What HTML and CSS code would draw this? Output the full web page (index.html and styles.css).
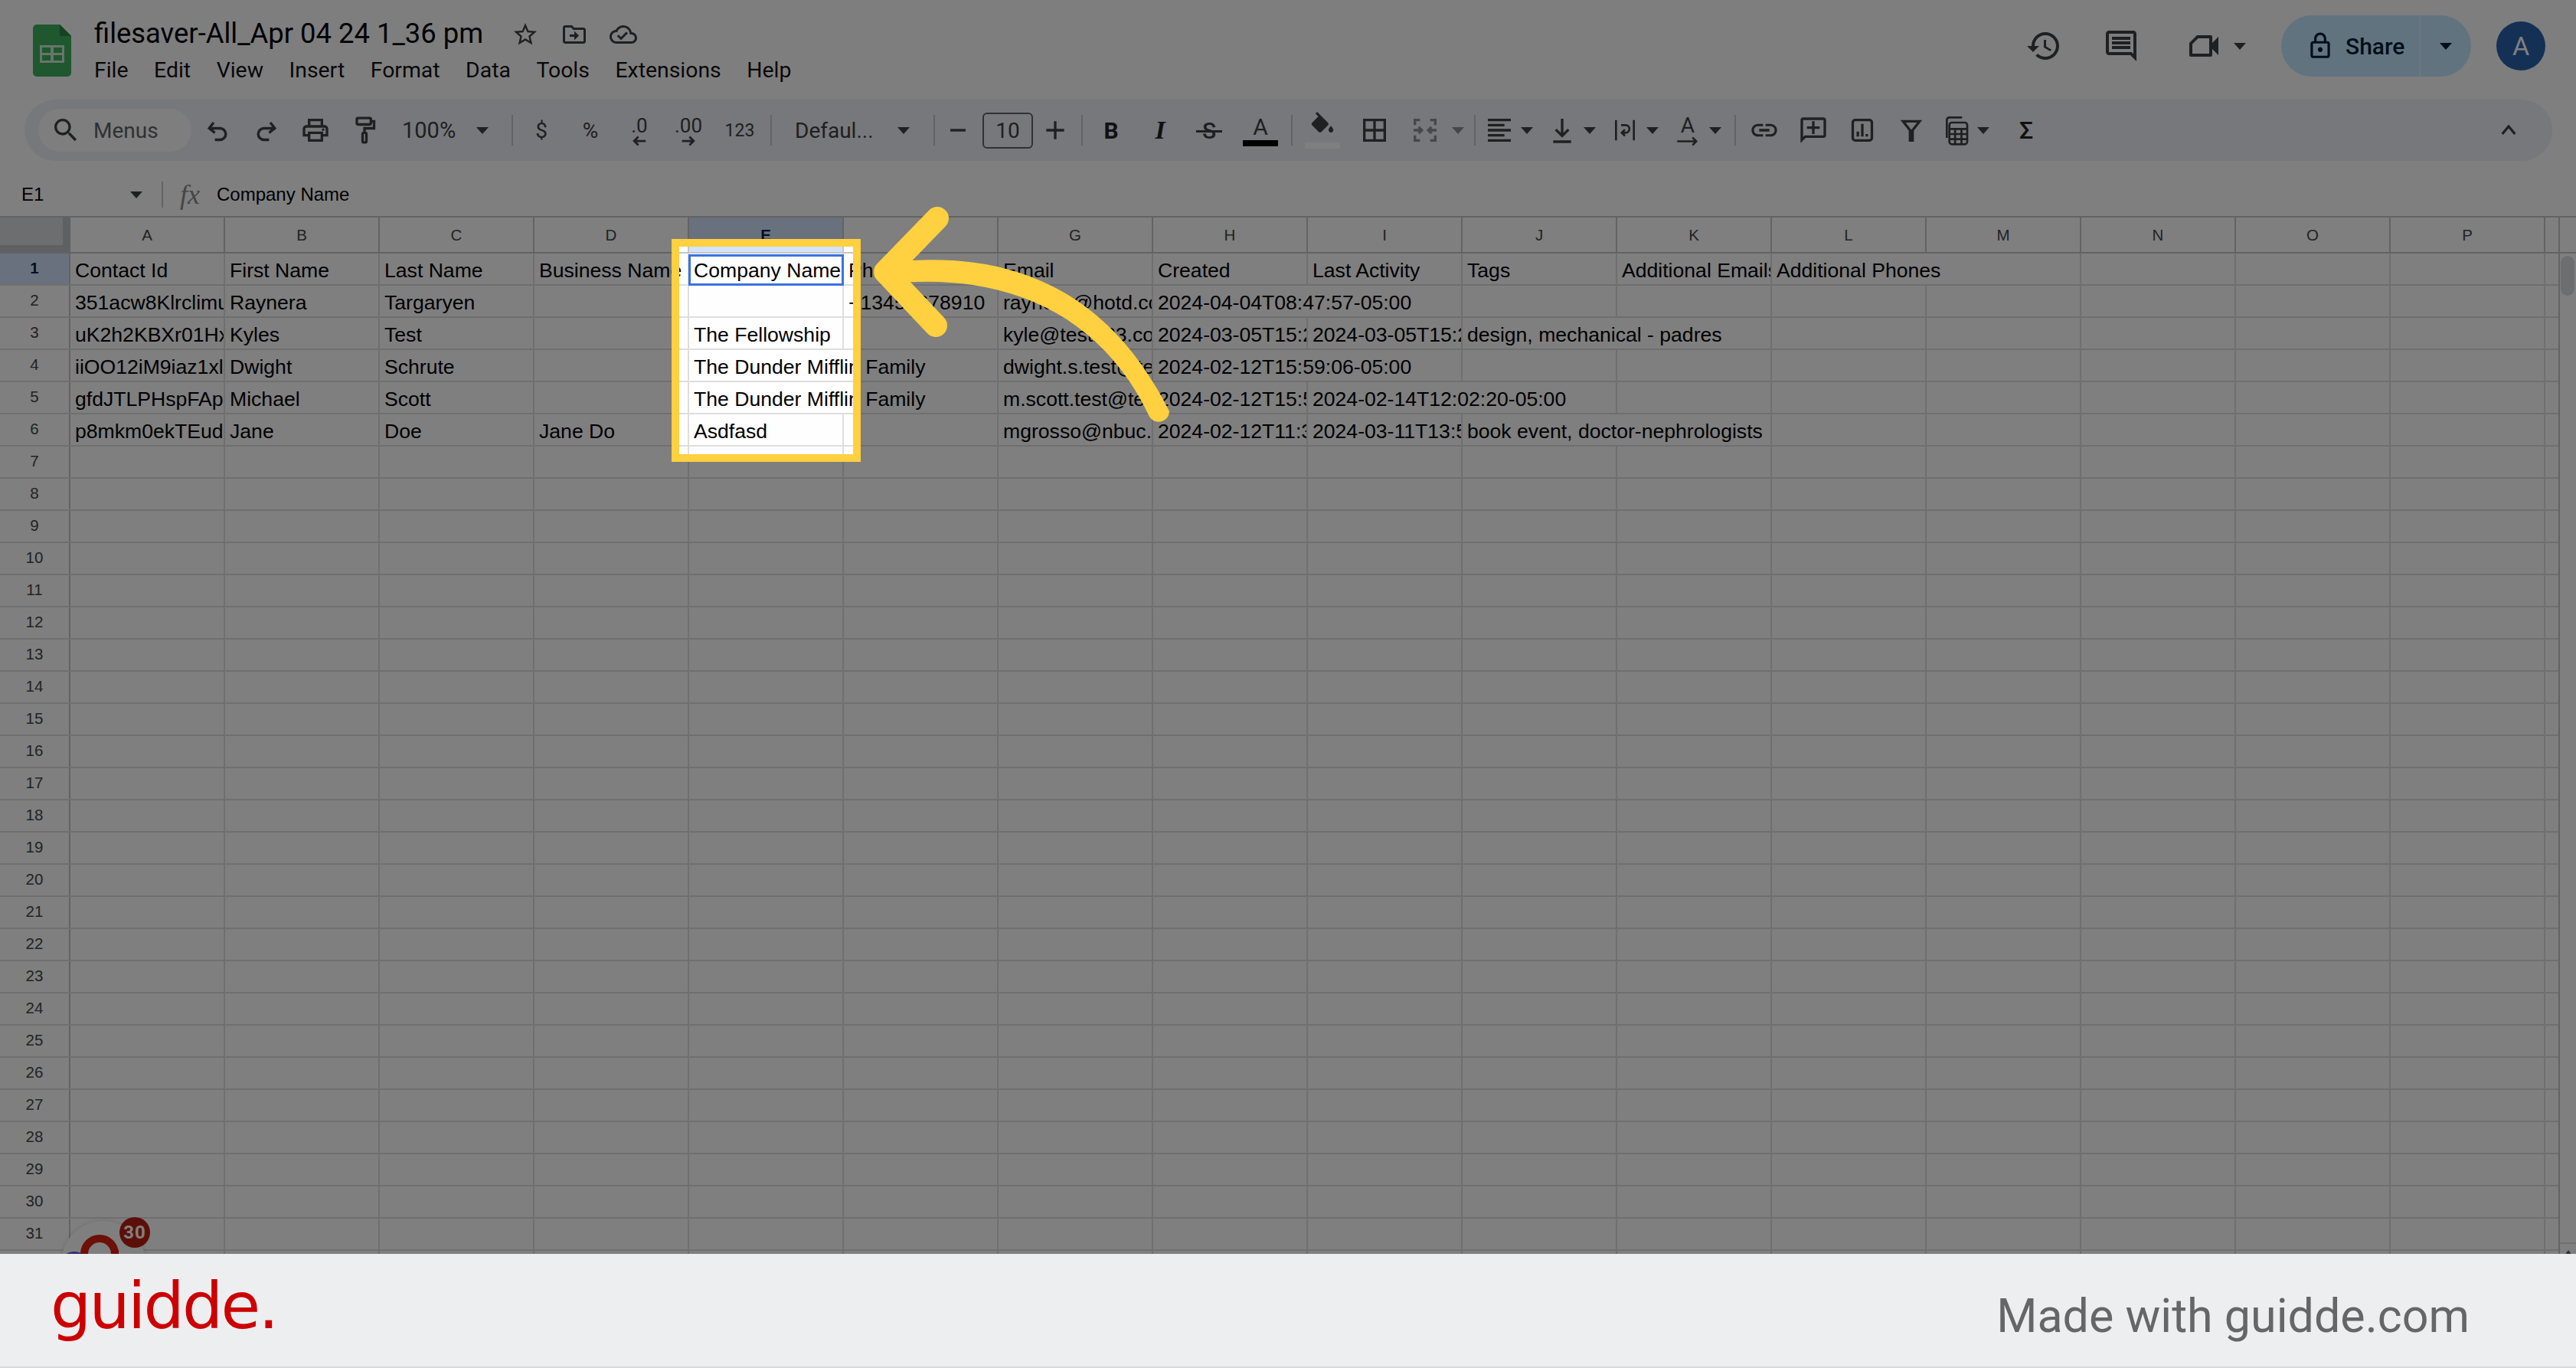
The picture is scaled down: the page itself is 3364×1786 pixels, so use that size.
FILE: index.html
```html
<!DOCTYPE html>
<html lang="en">
<head>
    <meta charset="UTF-8">
    <meta name="viewport" content="width=device-width, initial-scale=1.0">
    <title>filesaver-All_Apr 04 24 1_36 pm - Made with guidde</title>
    <link rel="stylesheet" href="styles.css">
</head>
<body>
<div class="app">
    <!-- title and menus -->
    <header class="topbar">
        <svg class="logo" viewBox="0 0 50 68"><path fill="#3fae5c" d="M5 0h30l15 15v48a5 5 0 0 1-5 5H5a5 5 0 0 1-5-5V5a5 5 0 0 1 5-5z"/><path fill="#2b8546" d="M35 0l15 15H35z"/><path fill="#fff" fill-opacity=".75" d="M9 27h32v23H9zm3 3v7h11v-7zm15 0v7h11v-7zM12 40v7h11v-7zm15 0v7h11v-7z" fill-rule="evenodd"/></svg>
        <div class="docinfo">
            <div class="titlerow">
                <span class="doctitle">filesaver-All_Apr 04 24 1_36 pm</span>
                <svg class="ic title-ic" viewBox="0 0 24 24"><path d="M22 9.24l-7.19-.62L12 2 9.19 8.63 2 9.24l5.46 4.73L5.82 21 12 17.27 18.18 21l-1.63-7.03L22 9.24zM12 15.4l-3.76 2.27 1-4.28-3.32-2.88 4.38-.38L12 6.1l1.71 4.04 4.38.38-3.32 2.88 1 4.28L12 15.4z"/></svg>
                <svg class="ic title-ic" viewBox="0 0 24 24"><path d="M20 6h-8l-2-2H4c-1.1 0-2 .9-2 2v12c0 1.1.9 2 2 2h16c1.1 0 2-.9 2-2V8c0-1.1-.9-2-2-2zm0 12H4V6h5.17l2 2H20v10zm-8-4H8v-2h4V9l4 4-4 4z"/></svg>
                <svg class="ic title-ic" viewBox="0 0 24 24"><path d="M19.35 10.04C18.67 6.59 15.64 4 12 4 9.11 4 6.6 5.64 5.35 8.04 2.34 8.36 0 10.91 0 14c0 3.31 2.69 6 6 6h13c2.76 0 5-2.24 5-5 0-2.64-2.05-4.78-4.65-4.96zM19 18H6c-2.21 0-4-1.79-4-4 0-2.05 1.53-3.76 3.56-3.97l1.07-.11.5-.95C8.08 7.14 9.94 6 12 6c2.62 0 4.88 1.86 5.39 4.43l.3 1.5 1.53.11c1.56.1 2.78 1.41 2.78 2.96 0 1.65-1.35 3-3 3zm-9-3.82l-2.09-2.09L6.5 13.5 10 17l6.01-6.01-1.41-1.41z"/></svg>
            </div>
            <nav class="menus">
                <span>File</span><span>Edit</span><span>View</span><span>Insert</span><span>Format</span><span>Data</span><span>Tools</span><span>Extensions</span><span>Help</span>
            </nav>
        </div>
        <div class="actions">
            <svg class="ic act-ic" viewBox="0 0 24 24"><path d="M13 3c-4.97 0-9 4.03-9 9H1l3.89 3.89.07.14L9 12H6c0-3.87 3.13-7 7-7s7 3.13 7 7-3.13 7-7 7c-1.93 0-3.68-.79-4.94-2.06l-1.42 1.42C8.27 19.99 10.51 21 13 21c4.97 0 9-4.03 9-9s-4.03-9-9-9zm-1 5v5l4.28 2.54.72-1.21-3.5-2.08V8H12z"/></svg>
            <svg class="ic act-ic comments" viewBox="0 0 24 24"><path d="M21.99 4c0-1.1-.89-2-1.99-2H4c-1.1 0-2 .9-2 2v12c0 1.1.9 2 2 2h14l4 4-.01-18zM20 4v13.17L18.83 16H4V4h16zM6 12h12v2H6zm0-3h12v2H6zm0-3h12v2H6z"/></svg>
            <div class="meet">
                <svg class="ic act-ic" viewBox="0 0 24 24"><path d="M8 5h9a1 1 0 0 1 1 1v12a1 1 0 0 1-1 1H4a1 1 0 0 1-1-1V10zm.8 2L5 10.8V17h11V7z"/><path d="M18 10l4-4v12l-4-4z"/></svg>
                <i class="tri"></i>
            </div>
            <div class="share">
                <div class="share-main">
                    <svg class="ic lock" viewBox="0 0 24 24"><path d="M18 8h-1V6c0-2.76-2.24-5-5-5S7 3.24 7 6v2H6c-1.1 0-2 .9-2 2v10c0 1.1.9 2 2 2h12c1.1 0 2-.9 2-2V10c0-1.1-.9-2-2-2zM9 6c0-1.66 1.34-3 3-3s3 1.34 3 3v2H9V6zm9 14H6V10h12v10zm-6-3c1.1 0 2-.9 2-2s-.9-2-2-2-2 .9-2 2 .9 2 2 2z"/></svg>
                    <span>Share</span>
                </div>
                <div class="share-more"><i class="tri dark"></i></div>
            </div>
            <div class="avatar">A</div>
        </div>
    </header>

    <!-- toolbar -->
    <div class="toolbar">
        <div class="search">
            <svg class="ic" viewBox="0 0 24 24"><path d="M15.5 14h-.79l-.28-.27C15.41 12.59 16 11.11 16 9.5 16 5.91 13.09 3 9.5 3S3 5.91 3 9.5 5.91 16 9.5 16c1.61 0 3.09-.59 4.23-1.57l.27.28v.79l5 4.99L20.49 19l-4.99-5zm-6 0C7.01 14 5 11.99 5 9.5S7.01 5 9.5 5 14 7.01 14 9.5 11.99 14 9.5 14z"/></svg>
            <span>Menus</span>
        </div>
        <div class="btn first"><svg class="ic line" viewBox="0 0 24 24"><path d="M9 6 5.500 10.500 10 14M6 10.500h8a4.500 4.500 0 0 1 0 9h-4"/></svg></div>
        <div class="btn"><svg class="ic line" viewBox="0 0 24 24"><path d="M15 6l3.500 4.500L14 14M18 10.500h-8a4.500 4.500 0 0 0 0 9h4"/></svg></div>
        <div class="btn"><svg class="ic" viewBox="0 0 24 24"><path d="M19 8h-1V3H6v5H5c-1.660 0-3 1.340-3 3v6h4v4h12v-4h4v-6c0-1.660-1.340-3-3-3zM8 5h8v3H8V5zm8 12v2H8v-4h8v2zm2-2v-2H6v2H4v-4c0-.550.450-1 1-1h14c.550 0 1 .450 1 1v4h-2z"/><circle cx="18" cy="11.500" r="1"/></svg></div>
        <div class="btn"><svg class="ic line" viewBox="0 0 24 24"><rect x="6" y="2.500" width="11" height="5" rx="1"/><path d="M17 5h2.500v5.500H12V14"/><rect x="10.500" y="14" width="3" height="7.500" rx="1"/></svg></div>
        <div class="zoom"><span>100%</span><i class="tri"></i></div>
        <div class="sep"></div>
        <div class="btn txt">$</div>
        <div class="btn txt">%</div>
        <div class="btn dec">
            <span>.0</span>
            <svg viewBox="0 0 16 10"><path d="M14 5H3M7 1 3 5l4 4"/></svg>
        </div>
        <div class="btn dec">
            <span>.00</span>
            <svg viewBox="0 0 16 10"><path d="M2 5h11M9 1l4 4-4 4"/></svg>
        </div>
        <div class="btn txt small">123</div>
        <div class="sep"></div>
        <div class="fontsel"><span>Defaul...</span><i class="tri"></i></div>
        <div class="sep"></div>
        <div class="btn minus"><svg class="ic line" viewBox="0 0 24 24"><path d="M6 12h12"/></svg></div>
        <div class="sizebox">10</div>
        <div class="btn plus"><svg class="ic line" viewBox="0 0 24 24"><path d="M5 12h14M12 5v14"/></svg></div>
        <div class="sep"></div>
        <div class="btn txt bold">B</div>
        <div class="btn txt slab">I</div>
        <div class="btn txt strike"><span>S</span></div>
        <div class="btn textcolor"><span>A</span><i class="colorbar black"></i></div>
        <div class="sep"></div>
        <div class="btn fill">
            <svg class="ic" viewBox="0 0 24 24"><path d="M16.560 8.940L7.620 0 6.210 1.410l2.380 2.380-5.150 5.150c-.590.590-.590 1.540 0 2.120l5.500 5.500c.290.290.680.440 1.060.440s.770-.150 1.060-.440l5.500-5.500c.590-.580.590-1.530 0-2.120zM19 11.500s-2 2.170-2 3.500c0 1.100.900 2 2 2s2-.900 2-2c0-1.330-2-3.500-2-3.500z"/></svg>
            <i class="colorbar white"></i>
        </div>
        <div class="btn borders"><svg class="ic" viewBox="0 0 24 24"><path d="M3 3v18h18V3H3zm8 16H5v-6h6v6zm0-8H5V5h6v6zm8 8h-6v-6h6v6zm0-8h-6V5h6v6z"/></svg></div>
        <div class="drop merge">
            <svg class="ic line" viewBox="0 0 24 24"><path d="M8 4H4v4M4 16v4h4M16 4h4v4M20 16v4h-4M3 12h6M7 9.500 9.500 12 7 14.500M21 12h-6M17 9.500 14.500 12l2.500 2.500"/></svg>
            <i class="tri"></i>
        </div>
        <div class="sep"></div>
        <div class="drop">
            <svg class="ic line" viewBox="0 0 24 24"><path d="M3 4h18M3 8h13M3 12h18M3 16h13M3 20h18"/></svg>
            <i class="tri"></i>
        </div>
        <div class="drop">
            <svg class="ic line" viewBox="0 0 24 24"><path d="M12 3v13M7 11.500l5 5 5-5M5 21h14"/></svg>
            <i class="tri"></i>
        </div>
        <div class="drop">
            <svg class="ic line thin" viewBox="0 0 24 24"><path d="M5 4v16M19 4v16M9 8h3.500a3 3 0 0 1 0 6H10M12 11.500 9.500 14l2.500 2.500"/></svg>
            <i class="tri"></i>
        </div>
        <div class="drop">
            <div class="rotate">
                <span>A</span>
                <svg viewBox="0 0 24 10"><path d="M1 5h20M17 1l4 4-4 4"/></svg>
            </div>
            <i class="tri"></i>
        </div>
        <div class="sep"></div>
        <div class="btn"><svg class="ic" viewBox="0 0 24 24"><path d="M3.900 12c0-1.710 1.390-3.100 3.100-3.100h4V7H7c-2.760 0-5 2.240-5 5s2.240 5 5 5h4v-1.900H7c-1.710 0-3.100-1.390-3.100-3.100zM8 13h8v-2H8v2zm9-6h-4v1.900h4c1.710 0 3.100 1.390 3.100 3.100s-1.390 3.100-3.100 3.100h-4V17h4c2.760 0 5-2.240 5-5s-2.240-5-5-5z"/></svg></div>
        <div class="btn"><svg class="ic" viewBox="0 0 24 24"><path d="M20 2H4c-1.100 0-2 .900-2 2v18l4-4h14c1.100 0 2-.900 2-2V4c0-1.100-.900-2-2-2zm0 14H5.200L4 17.200V4h16v12z"/><path d="M11 5h2v4h4v2h-4v4h-2v-4H7V9h4z"/></svg></div>
        <div class="btn"><svg class="ic line" viewBox="0 0 24 24"><rect x="4.500" y="4" width="15" height="16" rx="2"/><path d="M8.500 17v-4M12 17V7M15.500 17v-2"/></svg></div>
        <div class="btn"><svg class="ic line" viewBox="0 0 24 24"><path d="M5.500 5h13l-5.500 7v8h-2v-8z"/></svg></div>
        <div class="drop">
            <svg class="ic line thin" viewBox="0 0 24 24"><path d="M5 18V4a2 2 0 0 1 2-2h10"/><rect x="7" y="6" width="14" height="17" rx="2"/><path d="M7 11h14M7 15h14M7 19h14M11.500 11v12M16.500 11v12"/></svg>
            <i class="tri"></i>
        </div>
        <div class="btn txt sigma">Σ</div>
        <div class="btn collapse"><svg class="ic line" viewBox="0 0 24 24"><path d="M7 15l5-6 5 6"/></svg></div>
    </div>

    <!-- formula bar -->
    <div class="formulabar">
        <div class="namebox"><span>E1</span><i class="tri"></i></div>
        <div class="fx">fx</div>
        <div class="formula">Company Name</div>
    </div>

    <!-- sheet -->
    <div class="sheet">
        <div class="grid">
            <div class="colheads">
                <div class="corner"></div>
                <div>A</div><div>B</div><div>C</div><div>D</div><div class="picked">E</div><div>F</div><div>G</div><div>H</div><div>I</div><div>J</div><div>K</div><div>L</div><div>M</div><div>N</div><div>O</div><div>P</div>
            </div>
            <div class="row">
                <div class="rn picked">1</div>
                <div class="cell">Contact Id</div><div class="cell">First Name</div><div class="cell">Last Name</div><div class="cell">Business Name</div>
                <div class="cell active">Company Name</div><div class="cell">Phone</div><div class="cell">Email</div><div class="cell">Created</div>
                <div class="cell">Last Activity</div><div class="cell">Tags</div><div class="cell">Additional Emails</div><div class="cell over">Additional Phones</div>
            </div>
            <div class="row">
                <div class="rn">2</div>
                <div class="cell">351acw8KlrclimuQ</div><div class="cell">Raynera</div><div class="cell">Targaryen</div><div class="cell"></div>
                <div class="cell"></div><div class="cell">+13455678910</div><div class="cell">raynera@hotd.com</div><div class="cell over">2024-04-04T08:47:57-05:00</div>
            </div>
            <div class="row">
                <div class="rn">3</div>
                <div class="cell">uK2h2KBXr01HxQ</div><div class="cell">Kyles</div><div class="cell">Test</div><div class="cell"></div>
                <div class="cell">The Fellowship</div><div class="cell"></div><div class="cell">kyle@test123.com</div><div class="cell">2024-03-05T15:22:11-05:00</div>
                <div class="cell">2024-03-05T15:22:11-05:00</div><div class="cell over">design, mechanical - padres</div>
            </div>
            <div class="row">
                <div class="rn">4</div>
                <div class="cell">iiOO12iM9iaz1xlQ</div><div class="cell">Dwight</div><div class="cell">Schrute</div><div class="cell"></div>
                <div class="cell over">The Dunder Mifflin Family</div><div class="cell"></div><div class="cell">dwight.s.test@test.com</div><div class="cell over">2024-02-12T15:59:06-05:00</div>
            </div>
            <div class="row">
                <div class="rn">5</div>
                <div class="cell">gfdJTLPHspFApQ</div><div class="cell">Michael</div><div class="cell">Scott</div><div class="cell"></div>
                <div class="cell over">The Dunder Mifflin Family</div><div class="cell"></div><div class="cell">m.scott.test@test.com</div><div class="cell">2024-02-12T15:59:06-05:00</div>
                <div class="cell over">2024-02-14T12:02:20-05:00</div>
            </div>
            <div class="row">
                <div class="rn">6</div>
                <div class="cell">p8mkm0ekTEudQ</div><div class="cell">Jane</div><div class="cell">Doe</div><div class="cell">Jane Do</div>
                <div class="cell">Asdfasd</div><div class="cell"></div><div class="cell">mgrosso@nbuc.edu</div><div class="cell">2024-02-12T11:30:10-05:00</div>
                <div class="cell">2024-03-11T13:55:00-05:00</div><div class="cell over">book event, doctor-nephrologists</div>
            </div>
            <div class="row"><div class="rn">7</div></div>
            <div class="row"><div class="rn">8</div></div>
            <div class="row"><div class="rn">9</div></div>
            <div class="row"><div class="rn">10</div></div>
            <div class="row"><div class="rn">11</div></div>
            <div class="row"><div class="rn">12</div></div>
            <div class="row"><div class="rn">13</div></div>
            <div class="row"><div class="rn">14</div></div>
            <div class="row"><div class="rn">15</div></div>
            <div class="row"><div class="rn">16</div></div>
            <div class="row"><div class="rn">17</div></div>
            <div class="row"><div class="rn">18</div></div>
            <div class="row"><div class="rn">19</div></div>
            <div class="row"><div class="rn">20</div></div>
            <div class="row"><div class="rn">21</div></div>
            <div class="row"><div class="rn">22</div></div>
            <div class="row"><div class="rn">23</div></div>
            <div class="row"><div class="rn">24</div></div>
            <div class="row"><div class="rn">25</div></div>
            <div class="row"><div class="rn">26</div></div>
            <div class="row"><div class="rn">27</div></div>
            <div class="row"><div class="rn">28</div></div>
            <div class="row"><div class="rn">29</div></div>
            <div class="row"><div class="rn">30</div></div>
            <div class="row"><div class="rn">31</div></div>
            <div class="row"><div class="rn"></div></div>
        </div>
        <div class="scrollcol">
            <div class="scrollhead"></div>
            <div class="thumb"></div>
            <div class="scrollbtn"><i></i></div>
        </div>
    </div>

    <!-- floating widget, sits under the dim layer -->
    <div class="widget">
        <div class="widget-blue"></div>
        <div class="widget-ring"></div>
        <div class="widget-badge">30</div>
    </div>

    <!-- dim layer with the cut-out and the arrow on top -->
    <div class="spotlight"></div>
    <svg class="pointer" viewBox="0 0 3364 1637">
        <path class="arrow-head" d="M1224 285 1156 355 1222 425"/>
        <path class="arrow-tail" d="M1165 342C1300 328 1440 362 1527 537A14 14 0 0 1 1500 542C1440 415 1320 355 1165 370z"/>
    </svg>
</div>

<footer class="brandbar">
    <div class="brand">guidde.</div>
    <div class="madewith">Made with guidde.com</div>
</footer>
</body>
</html>
```

FILE: styles.css
```css
* {
    box-sizing: border-box;
}
body {
    margin: 0;
    width: 3364px;
    height: 1786px;
    overflow: hidden;
    font-family: "Liberation Sans", Arial, sans-serif;
    background-color: #fff;
    color: #000;
}
.app {
    position: relative;
    height: 1637px;
    overflow: hidden;
    background-color: #fefeff;
}

/* icons */
.ic {
    display: block;
    width: 40px;
    height: 40px;
    fill: #3c4043;
    flex: none;
}
.ic.line {
    fill: none;
    stroke: #3c4043;
    stroke-width: 2;
}
.ic.line.thin {
    stroke-width: 1.6;
}
.tri {
    display: block;
    flex: none;
    width: 0;
    height: 0;
    border-left: 8px solid transparent;
    border-right: 8px solid transparent;
    border-top: 9px solid #3c4043;
}

/* top bar */
.topbar {
    height: 130px;
    display: flex;
    align-items: flex-start;
    padding: 32px 40px 0 43px;
    background-color: #fdfdfe;
}
.logo {
    width: 50px;
    height: 68px;
    flex: none;
}
.docinfo {
    margin-left: 30px;
    margin-top: -14px;
    font-family: Roboto, sans-serif;
}
.titlerow {
    display: flex;
    align-items: center;
    height: 50px;
}
.doctitle {
    font-size: 36.4px;
    color: #000;
    width: 545px;
}
.title-ic {
    width: 36px;
    height: 36px;
    margin-right: 28px;
    margin-top: 4px;
}
.menus {
    display: flex;
    gap: 33.5px;
    font-size: 28.4px;
    line-height: 44px;
    margin-top: 2px;
    color: #111;
}
.actions {
    margin-left: auto;
    margin-top: -12px;
    display: flex;
    align-items: center;
    height: 80px;
    font-family: Roboto, sans-serif;
}
.act-ic {
    width: 48px;
    height: 48px;
    margin-right: 53px;
}
.act-ic.comments {
    margin-right: 59px;
}
.meet {
    display: flex;
    align-items: center;
    margin-right: 46px;
}
.meet .act-ic {
    margin-right: 16px;
}
.share {
    width: 248px;
    height: 80px;
    display: flex;
    border-radius: 40px;
    background-color: #c2e7ff;
    overflow: hidden;
}
.share-main {
    width: 182px;
    display: flex;
    align-items: center;
    padding-left: 32px;
    gap: 14px;
    font-size: 30px;
    font-weight: 500;
    color: #001d35;
    border-right: 2px solid #dcefff;
}
.lock {
    fill: #001d35;
    width: 38px;
    height: 38px;
}
.share-more {
    flex: 1;
    display: flex;
    align-items: center;
    justify-content: center;
}
.tri.dark {
    border-top-color: #001d35;
}
.avatar {
    width: 64px;
    height: 64px;
    margin-left: 33px;
    border-radius: 50%;
    background-color: #2860aa;
    color: #fff;
    font-size: 34px;
    line-height: 64px;
    text-align: center;
}

/* toolbar */
.toolbar {
    height: 80px;
    margin: 0 31px 0 32px;
    padding: 0 25px 0 18px;
    border-radius: 40px;
    background-color: #eef1f6;
    display: flex;
    align-items: center;
    font-family: Roboto, sans-serif;
    color: #3c4043;
}
.search {
    width: 200px;
    height: 56px;
    flex: none;
    display: flex;
    align-items: center;
    gap: 16px;
    padding-left: 16px;
    border-radius: 28px;
    background-color: #fcfcfd;
    font-size: 28px;
    color: #5f6368;
}
.btn {
    width: 64px;
    height: 60px;
    flex: none;
    display: flex;
    align-items: center;
    justify-content: center;
}
.btn.first {
    margin-left: 2px;
}
.sep {
    width: 2px;
    height: 40px;
    flex: none;
    margin: 0 5px;
    background-color: #c7c7c7;
}
.zoom {
    width: 155px;
    flex: none;
    display: flex;
    align-items: center;
    padding-left: 17px;
    font-size: 29px;
}
.zoom .tri {
    margin-left: 27px;
}
.txt {
    font-size: 28px;
}
.txt.small {
    font-size: 23px;
    width: 70px;
}
.txt.bold {
    font-weight: 700;
    font-size: 30px;
    color: #222;
}
.txt.slab {
    font-family: "Liberation Serif", serif;
    font-style: italic;
    font-weight: 700;
    font-size: 34px;
    color: #222;
}
.txt.strike span {
    position: relative;
    font-size: 30px;
    font-weight: 500;
}
.txt.strike span::after {
    content: "";
    position: absolute;
    left: -8px;
    right: -8px;
    top: 50%;
    height: 3px;
    background-color: #3c4043;
}
.txt.sigma {
    font-size: 32px;
    font-weight: 500;
    color: #222;
    margin-left: 4px;
}
.dec {
    flex-direction: column;
    font-size: 26px;
    line-height: 30px;
}
.dec svg {
    width: 22px;
    height: 14px;
    margin-top: -2px;
    fill: none;
    stroke: #3c4043;
    stroke-width: 2;
}
.fontsel {
    width: 201px;
    flex: none;
    display: flex;
    align-items: center;
    padding-left: 25px;
    font-size: 28px;
}
.fontsel .tri {
    margin-left: auto;
    margin-right: 26px;
}
.btn.minus {
    width: 50px;
}
.sizebox {
    width: 66px;
    height: 47px;
    flex: none;
    margin-left: 7px;
    border: 2px solid #5f6368;
    border-radius: 6px;
    font-size: 28px;
    line-height: 43px;
    text-align: center;
}
.btn.plus {
    width: 58px;
}
.textcolor {
    width: 70px;
    flex-direction: column;
    font-size: 30px;
    line-height: 34px;
}
.colorbar {
    display: block;
    width: 46px;
    height: 8px;
}
.colorbar.black {
    background-color: #000;
}
.colorbar.white {
    background-color: #fff;
    margin-top: 2px;
}
.btn.fill {
    width: 68px;
    flex-direction: column;
}
.btn.fill .ic {
    width: 38px;
    height: 38px;
}
.btn.borders {
    width: 68px;
}
.drop {
    display: flex;
    align-items: center;
    flex: none;
    margin-right: 10px;
}
.drop .ic,
.drop .rotate {
    width: 52px;
    padding: 0 6px;
}
.drop .tri {
    margin: 0 2px;
}
.merge {
    margin-left: 6px;
    margin-right: 6px;
    opacity: .55;
}
.merge .tri {
    margin-left: 9px;
}
.rotate {
    display: flex;
    flex-direction: column;
    align-items: center;
    font-size: 28px;
    line-height: 28px;
}
.rotate svg {
    width: 30px;
    height: 13px;
    fill: none;
    stroke: #3c4043;
    stroke-width: 2;
}
.btn.collapse {
    margin-left: auto;
}

/* formula bar */
.formulabar {
    height: 56px;
    margin-top: 16px;
    display: flex;
    align-items: center;
    background-color: #fff;
}
.namebox {
    width: 213px;
    height: 34px;
    flex: none;
    display: flex;
    align-items: center;
    padding-left: 28px;
    font-size: 24px;
    border-right: 2px solid #c7c7c7;
}
.namebox .tri {
    margin-left: auto;
    margin-right: 25px;
}
.fx {
    margin-left: 22px;
    width: 48px;
    font-family: "Liberation Serif", serif;
    font-style: italic;
    font-size: 36px;
    color: #8a8a8a;
}
.formula {
    font-size: 24px;
}

/* sheet */
.sheet {
    display: flex;
    height: 1355px;
    border-top: 2px solid #c4c7c5;
}
.grid {
    width: 3341px;
    flex: none;
}
.colheads,
.row {
    display: grid;
    grid-template-columns: 92px repeat(16, 202px) 17px;
}
.colheads {
    height: 47px;
    border-bottom: 2px solid #c4c7c5;
    font-size: 20.5px;
    line-height: 45px;
    text-align: center;
    color: #444746;
}
.colheads div {
    height: 45px;
    border-right: 2px solid #c7c7c7;
}
.colheads .corner {
    background-color: #dadce0;
    border-right: 10px solid #bfc1c4;
    border-bottom: 9px solid #bfc1c4;
    background-clip: padding-box;
}
.colheads .picked {
    background-color: #d3e3fd;
    color: #041e49;
    font-weight: 700;
}
.row {
    height: 42px;
    border-bottom: 2px solid #dedede;
    background-image: linear-gradient(to left, #dedede 2px, transparent 2px);
    background-size: 202px 100%;
    background-position: 92px 0;
    background-repeat: repeat-x;
}
.rn {
    height: 40px;
    background-color: #fff;
    border-right: 2px solid #c7c7c7;
    font-size: 20.5px;
    line-height: 38px;
    text-align: center;
    color: #444746;
}
.rn.picked {
    background-color: #d3e3fd;
    color: #041e49;
    font-weight: 700;
}
.cell {
    height: 40px;
    min-width: 0;
    padding: 0 0 0 6px;
    border-right: 2px solid transparent;
    overflow: hidden;
    white-space: nowrap;
    font-size: 26.6px;
    line-height: 44px;
}
.cell.over {
    overflow: visible;
    border-right: 0;
    background-color: #fff;
}
.cell.active {
    position: relative;
    overflow: visible;
}
.cell.active::after {
    content: "";
    position: absolute;
    left: -1px;
    right: -2px;
    top: 1px;
    bottom: -2px;
    border: 3px solid #3b72e0;
}
.scrollcol {
    flex: 1;
    display: flex;
    flex-direction: column;
    border-left: 2px solid #c7c7c7;
}
.scrollhead {
    height: 47px;
    flex: none;
    border-bottom: 2px solid #c4c7c5;
}
.thumb {
    width: 18px;
    height: 52px;
    flex: none;
    margin: 3px 0 0 1px;
    border-radius: 9px;
    background-color: #dadce0;
}
.scrollbtn {
    margin-top: auto;
    height: 15px;
    flex: none;
    display: flex;
    justify-content: center;
    padding-top: 8px;
    border-top: 2px solid #dedede;
}
.scrollbtn i {
    width: 0;
    height: 0;
    border-left: 5px solid transparent;
    border-right: 5px solid transparent;
    border-bottom: 7px solid #5f6368;
}

/* widget */
.widget {
    position: absolute;
    left: 80px;
    top: 1594px;
    width: 110px;
    height: 110px;
    border-radius: 50%;
    background-color: #fff;
    box-shadow: 0 0 6px rgba(0, 0, 0, .15);
}
.widget-blue {
    position: absolute;
    left: -3px;
    top: 40px;
    width: 40px;
    height: 40px;
    border-radius: 50%;
    background-color: #5560e0;
}
.widget-ring {
    position: absolute;
    left: 25px;
    top: 18px;
    width: 50px;
    height: 50px;
    border-radius: 50%;
    border: 10px solid #d82010;
}
.widget-ring::after {
    content: "";
    position: absolute;
    right: -10px;
    top: 10px;
    width: 10px;
    height: 30px;
    background-color: #d82010;
}
.widget-badge {
    position: absolute;
    left: 76px;
    top: -5px;
    width: 40px;
    height: 40px;
    border-radius: 50%;
    background-color: #b81e12;
    color: #fff;
    font-family: Roboto, sans-serif;
    font-weight: 700;
    font-size: 24px;
    letter-spacing: 1px;
    line-height: 40px;
    text-align: center;
}

/* dim layer */
.spotlight {
    position: absolute;
    left: 877px;
    top: 312px;
    width: 247px;
    height: 291px;
    border: 10px solid #ffd03f;
    box-shadow: 0 0 0 4000px rgba(0, 0, 0, .5);
}
.pointer {
    position: absolute;
    left: 0;
    top: 0;
    width: 3364px;
    height: 1637px;
}
.arrow-head {
    fill: none;
    stroke: #ffd03f;
    stroke-width: 30;
    stroke-linecap: round;
    stroke-linejoin: round;
}
.arrow-tail {
    fill: #ffd03f;
}

/* footer */
.brandbar {
    height: 149px;
    display: flex;
    align-items: center;
    justify-content: space-between;
    padding: 0 139px 0 66px;
    background-color: #edeef0;
    border-bottom: 2px solid #d8d9db;
}
.brand {
    font-family: "DejaVu Sans", sans-serif;
    font-size: 84px;
    letter-spacing: -2.8px;
    color: #cc0000;
    line-height: 1;
    margin-top: -12px;
}
.madewith {
    font-family: Roboto, sans-serif;
    font-size: 61px;
    color: #666;
    margin-top: 14px;
}
```
